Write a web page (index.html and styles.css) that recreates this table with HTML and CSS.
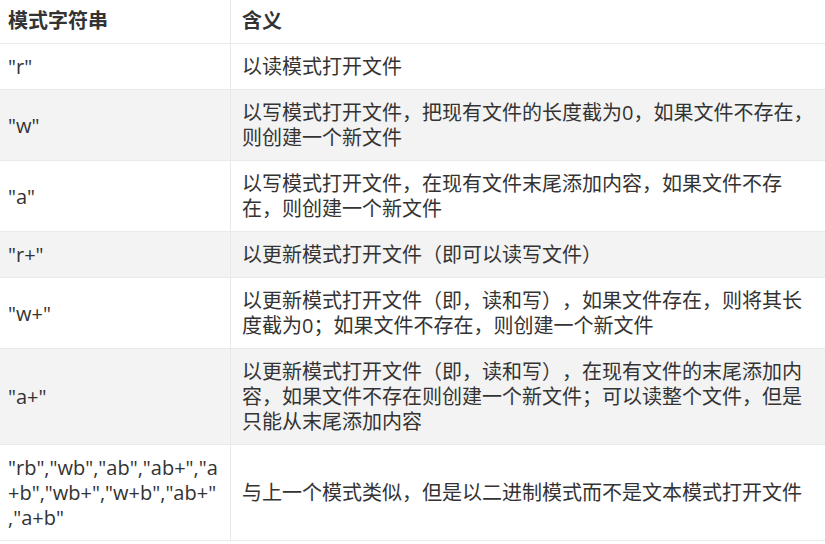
FILE: index.html
```html
<!DOCTYPE html>
<html lang="zh-CN">
<head>
<meta charset="utf-8">
<title>模式字符串</title>
<link rel="stylesheet" href="styles.css">
</head>
<body>
<table class="modes">
  <thead>
    <tr>
      <th class="col-mode">模式字符串</th>
      <th class="col-desc">含义</th>
    </tr>
  </thead>
  <tbody>
    <tr>
      <td class="col-mode">"r"</td>
      <td class="col-desc">以读模式打开文件</td>
    </tr>
    <tr class="alt">
      <td class="col-mode">"w"</td>
      <td class="col-desc">以写模式打开文件，把现有文件的长度截为0，如果文件不存在，则创建一个新文件</td>
    </tr>
    <tr>
      <td class="col-mode">"a"</td>
      <td class="col-desc">以写模式打开文件，在现有文件末尾添加内容，如果文件不存在，则创建一个新文件</td>
    </tr>
    <tr class="alt">
      <td class="col-mode">"r+"</td>
      <td class="col-desc">以更新模式打开文件（即可以读写文件）</td>
    </tr>
    <tr>
      <td class="col-mode">"w+"</td>
      <td class="col-desc">以更新模式打开文件（即，读和写），如果文件存在，则将其长度截为0；如果文件不存在，则创建一个新文件</td>
    </tr>
    <tr class="alt">
      <td class="col-mode">"a+"</td>
      <td class="col-desc">以更新模式打开文件（即，读和写），在现有文件的末尾添加内容，如果文件不存在则创建一个新文件；可以读整个文件，但是只能从末尾添加内容</td>
    </tr>
    <tr>
      <td class="col-mode">"rb","wb","ab","ab+","a<br>+b","wb+","w+b","ab+"<br>,"a+b"</td>
      <td class="col-desc">与上一个模式类似，但是以二进制模式而不是文本模式打开文件</td>
    </tr>
  </tbody>
</table>
</body>
</html>
```
FILE: styles.css
```css
html, body {
  margin: 0;
  padding: 0;
  background: #ffffff;
}

body {
  font-family: "Open Sans", "Noto Sans CJK SC", sans-serif;
  font-size: 20px;
  line-height: 25px;
  color: #333333;
  text-spacing-trim: space-all;
}

.modes {
  border-collapse: collapse;
  width: 825px;
  table-layout: fixed;
}

.modes th,
.modes td {
  padding: 10px 8px 10px 11px;
  border-bottom: 1px solid #e9e9e9;
  text-align: left;
  vertical-align: middle;
  font-family: "Open Sans", "Noto Sans CJK SC", sans-serif;
  text-spacing-trim: space-all;
}

.modes th {
  font-weight: bold;
  padding-top: 8px;
  padding-bottom: 10px;
}

.modes .col-mode {
  width: 211px;
  padding-left: 8px;
  padding-right: 11px;
  border-right: 1px solid #e9e9e9;
}

.modes .col-desc {
  padding-left: 11px;
  padding-right: 7px;
}

.modes tr.alt td {
  background: #f3f3f3;
}
```
